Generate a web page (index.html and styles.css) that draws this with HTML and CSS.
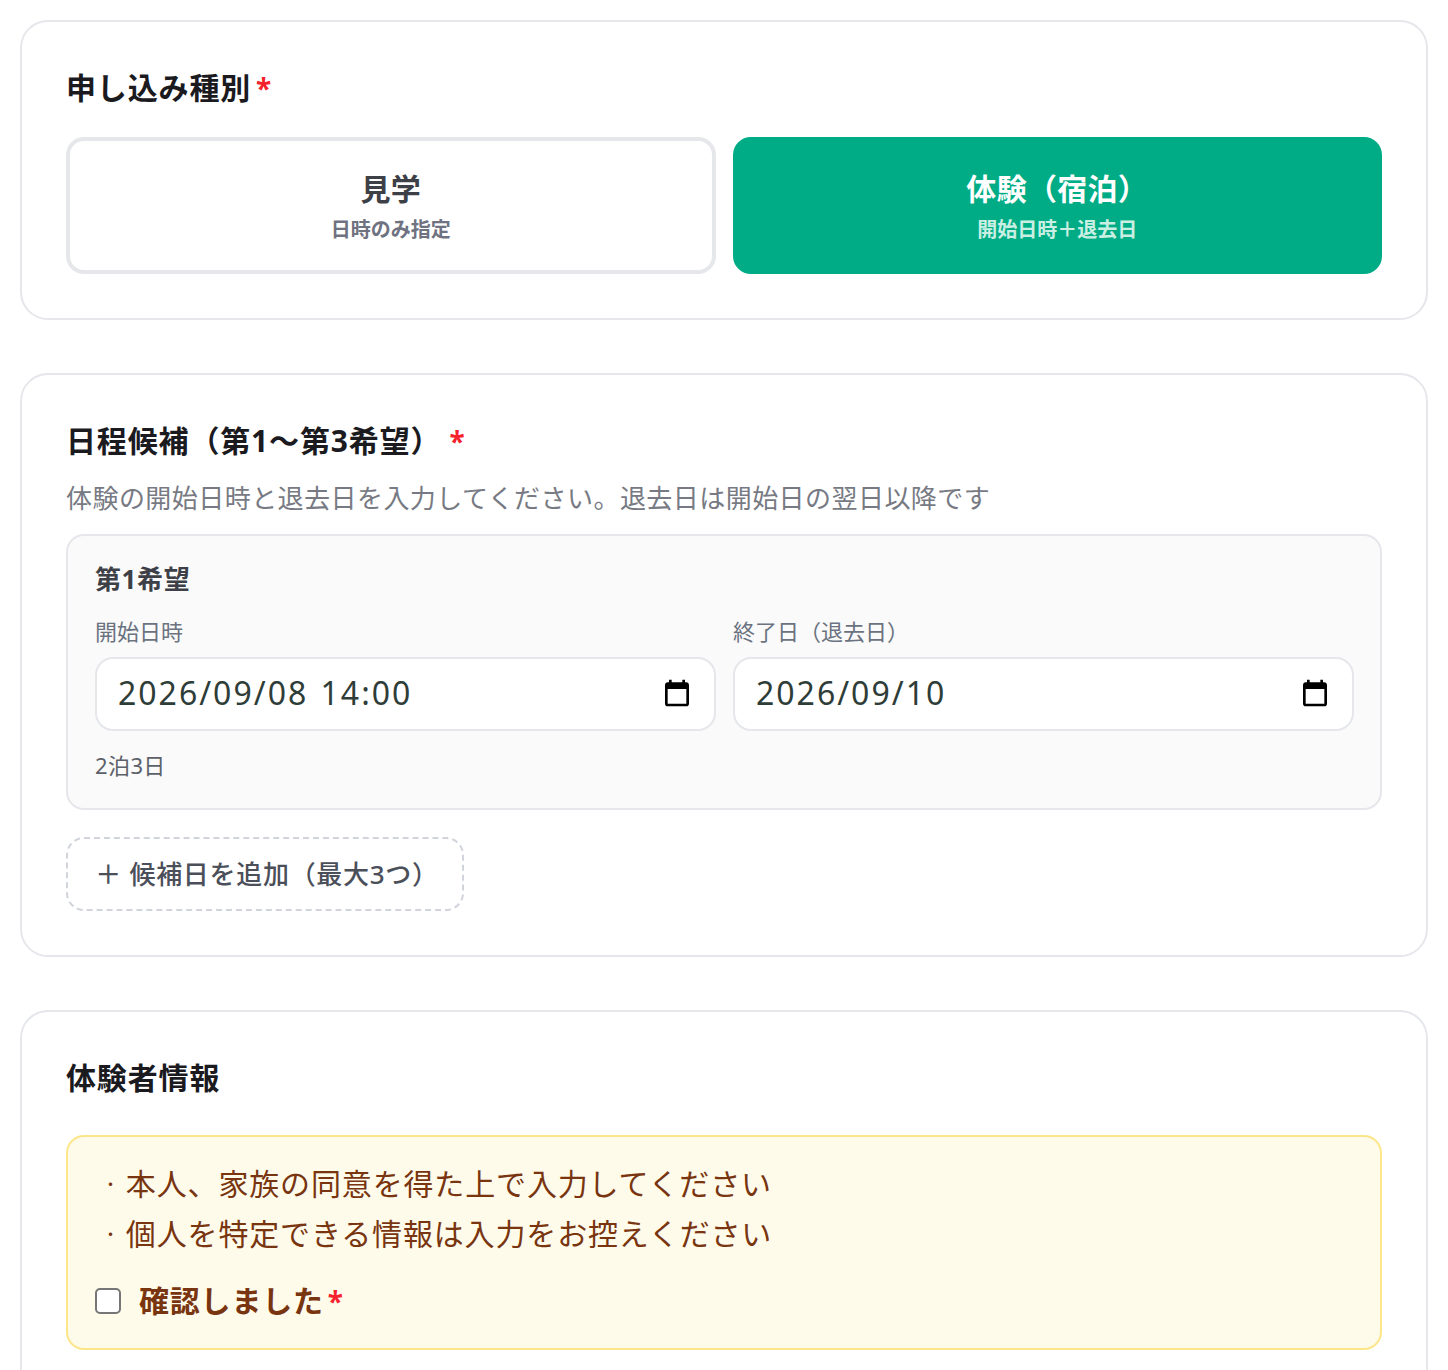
FILE: index.html
```html
<!DOCTYPE html>
<html lang="ja">
<head>
    <meta charset="UTF-8">
    <meta name="viewport" content="width=device-width, initial-scale=1.0">
    <title>申し込み</title>
    <link rel="stylesheet" href="styles.css">
</head>
<body>
    <div class="pageCls">
        <section class="cardCls">
            <h2 class="cardTitle titleType">申し込み種別<span class="req">*</span></h2>
            <div class="typeRow">
                <button class="typeBtn">
                    <span class="typeName">見学</span>
                    <span class="typeSub">日時のみ指定</span>
                </button>
                <button class="typeBtn typeBtnOn">
                    <span class="typeName">体験（宿泊）</span>
                    <span class="typeSub">開始日時＋退去日</span>
                </button>
            </div>
        </section>

        <section class="cardCls">
            <h2 class="cardTitle">日程候補（第1〜第3希望）<span class="req reqFar">*</span></h2>
            <p class="descCls">体験の開始日時と退去日を入力してください。退去日は開始日の翌日以降です</p>
            <div class="wishBox">
                <h3 class="wishTitle">第1希望</h3>
                <div class="wishFields">
                    <div class="fieldCls">
                        <label class="fieldLabel">開始日時</label>
                        <div class="dateInput">
                            <span>2026/09/08 14:00</span>
                            <svg class="calIcon" viewBox="0 0 24 24"><path d="M19 4h-1V2h-2v2H8V2H6v2H5c-1.1 0-2 .9-2 2v14c0 1.1.9 2 2 2h14c1.1 0 2-.9 2-2V6c0-1.1-.9-2-2-2zm0 16H5V9h14v11z"/></svg>
                        </div>
                    </div>
                    <div class="fieldCls">
                        <label class="fieldLabel">終了日（退去日）</label>
                        <div class="dateInput">
                            <span>2026/09/10</span>
                            <svg class="calIcon" viewBox="0 0 24 24"><path d="M19 4h-1V2h-2v2H8V2H6v2H5c-1.1 0-2 .9-2 2v14c0 1.1.9 2 2 2h14c1.1 0 2-.9 2-2V6c0-1.1-.9-2-2-2zm0 16H5V9h14v11z"/></svg>
                        </div>
                    </div>
                </div>
                <p class="stayCls">2泊3日</p>
            </div>
            <button class="addBtn">＋ 候補日を追加（最大3つ）</button>
        </section>

        <section class="cardCls cardLast">
            <h2 class="cardTitle titleInfo">体験者情報</h2>
            <div class="noticeBox">
                <p class="noticeLine"><span class="noticeDot">・</span>本人、家族の同意を得た上で入力してください</p>
                <p class="noticeLine"><span class="noticeDot">・</span>個人を特定できる情報は入力をお控えください</p>
                <label class="checkRow">
                    <span class="checkBox"></span>
                    <span class="checkText">確認しました<span class="req reqNear">*</span></span>
                </label>
            </div>
        </section>
    </div>
</body>
</html>
```

FILE: styles.css
```css
*{margin:0;padding:0;box-sizing:border-box;}
html,body{height:1370px;overflow:hidden;}
body{background:#fff;color:#1f2023;font-family:"Noto Sans","Noto Sans CJK JP",sans-serif;}
.pageCls{display:flex;flex-direction:column;gap:53px;padding:20px 20px 0 20px;}
.cardCls{border:2px solid #e5e7eb;border-radius:28px;padding:44px;background:#fff;}
.cardLast{padding-bottom:60px;}
.cardTitle{font-size:30px;line-height:44px;font-weight:700;color:#1a1a1f;letter-spacing:.85px;}
.titleType{margin-bottom:27px;}
.titleInfo{margin-bottom:35px;}
.req{color:#f5222d;margin-left:5px;font-size:28px;letter-spacing:0;}
.reqFar{margin-left:8px;}
.reqNear{margin-left:4px;}
.typeRow{display:grid;grid-template-columns:1fr 1fr;gap:17px;}
.typeBtn{height:137px;display:flex;flex-direction:column;align-items:center;justify-content:center;gap:4px;background:#fff;border:4px solid #e5e7eb;border-radius:18px;font-family:inherit;color:#3d4046;}
.typeBtnOn{background:#00ac85;border-color:#00ac85;color:#fff;}
.typeName{font-size:30px;line-height:44px;font-weight:700;letter-spacing:.3px;}
.typeSub{font-size:20px;line-height:30px;font-weight:700;color:#6f7280;}
.typeBtnOn .typeSub{color:#c9efe3;}
.descCls{font-size:26px;line-height:38px;color:#777a83;margin-top:16px;margin-bottom:17px;letter-spacing:.45px;}
.wishBox{background:#fafafa;border:2px solid #e5e7eb;border-radius:18px;padding:25px 26px 27px 27px;}
.wishTitle{font-size:26px;line-height:36px;font-weight:700;color:#3d4046;margin-bottom:18px;letter-spacing:.6px;}
.wishFields{display:grid;grid-template-columns:1fr 1fr;gap:17px;}
.fieldLabel{display:block;font-size:22px;line-height:32px;color:#6b7280;margin-bottom:10px;}
.dateInput{height:74px;display:flex;align-items:center;justify-content:space-between;padding:0 21px 3px 21px;background:#fff;border:2px solid #e5e7eb;border-radius:18px;font-size:32px;letter-spacing:2px;word-spacing:2px;color:#2f3d38;}
.calIcon{width:32px;height:32px;fill:#000;}
.stayCls{font-size:22px;line-height:32px;color:#5c6068;margin-top:18px;letter-spacing:.4px;}
.addBtn{display:block;width:398px;height:74px;margin-top:27px;padding:0 0 3px 4px;background:#fff;border:2px dashed #d1d5db;border-radius:18px;font-family:inherit;font-size:26px;font-weight:500;color:#4b4f59;letter-spacing:.7px;}
.noticeBox{background:#fffbeb;border:2px solid #fde68a;border-radius:18px;padding:22px 26px 25px 27px;color:#78350f;}
.noticeLine{font-size:30px;line-height:50px;letter-spacing:.85px;}
.noticeDot{display:inline-block;width:30.85px;font-size:16px;text-align:center;vertical-align:5px;line-height:1;letter-spacing:0;}
.checkRow{display:flex;align-items:center;gap:18px;margin-top:20px;}
.checkBox{width:26px;height:26px;background:#fff;border:2px solid #767676;border-radius:5px;}
.checkText{font-size:30px;line-height:44px;font-weight:700;letter-spacing:.8px;}
```
